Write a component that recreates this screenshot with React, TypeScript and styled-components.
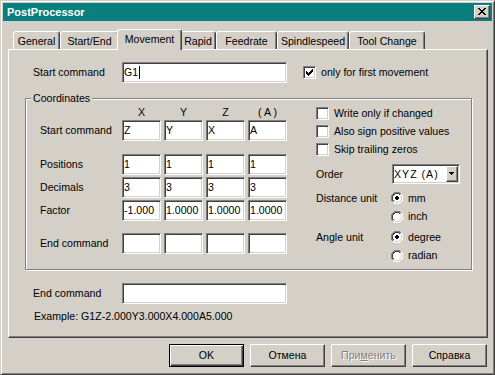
import React from 'react';
import styled, { createGlobalStyle, css } from 'styled-components';

const FACE = '#d4d0c8';
const SHADOW = '#808080';
const DARK = '#404040';
const HILITE = '#ffffff';

const GlobalStyle = createGlobalStyle`
  html, body { margin: 0; padding: 0; background: ${FACE}; }
  body {
    font-family: "Liberation Sans", Arial, sans-serif;
    font-size: 10.6px;
    color: #000;
  }
  * { box-sizing: border-box; }
`;

const sunken = css`
  background: #fff;
  border: 1px solid;
  border-color: ${SHADOW} ${HILITE} ${HILITE} ${SHADOW};
  box-shadow: inset 1px 1px ${DARK}, inset -1px -1px ${FACE};
`;

const raised = css`
  background: ${FACE};
  border: 1px solid;
  border-color: ${HILITE} ${DARK} ${DARK} ${HILITE};
  box-shadow: inset -1px -1px ${SHADOW};
`;

const Window = styled.div`
  width: 495px;
  height: 375px;
  background: ${FACE};
  border: 1px solid;
  border-color: ${FACE} ${DARK} ${DARK} ${FACE};
  box-shadow: inset 1px 1px ${HILITE}, inset -1px -1px ${SHADOW};
  padding: 2px;
  display: flex;
  flex-direction: column;
`;

const TitleBar = styled.div`
  height: 18px;
  flex-shrink: 0;
  background: #0a7f80;
  display: flex;
  align-items: center;
  padding: 0 2px 0 4px;
`;

const TitleText = styled.span`
  color: #fff;
  font-weight: bold;
  font-size: 11px;
  line-height: 13px;
`;

const CloseButton = styled.div`
  ${raised};
  margin-left: auto;
  width: 16px;
  height: 14px;
  display: flex;
  align-items: center;
  justify-content: center;
  padding: 0 1px 1px 0;
  & svg { display: block; }
`;

const Body = styled.div`
  flex: 1;
  display: flex;
  flex-direction: column;
  padding: 8px 4px 0 5px;
`;

const TabStrip = styled.div`
  display: flex;
  align-items: flex-end;
  height: 20px;
  padding-left: 5px;
`;

const Tab = styled.div<{ $w: number; $active?: boolean }>`
  width: ${(p) => p.$w}px;
  height: 18px;
  flex-shrink: 0;
  display: flex;
  align-items: center;
  justify-content: center;
  padding-top: 1px;
  background: ${FACE};
  border: 1px solid;
  border-bottom: 0;
  border-color: ${HILITE} ${DARK} transparent ${HILITE};
  border-radius: 3px 3px 0 0;
  box-shadow: inset -1px 0 ${SHADOW};
  white-space: nowrap;
  ${(p) =>
    p.$active &&
    css`
      width: ${p.$w + 4}px;
      height: 21px;
      margin: 0 -2px -1px;
      padding: 0 0 2px;
      position: relative;
      z-index: 2;
    `}
`;

const Panel = styled.div`
  position: relative;
  height: 289px;
  flex-shrink: 0;
  border: 1px solid;
  border-color: ${HILITE} ${DARK} ${DARK} ${HILITE};
  box-shadow: inset -1px -1px ${SHADOW};
  padding: 12px 0 0 16px;
  display: flex;
  flex-direction: column;
  align-items: flex-start;
`;

const FieldRow = styled.div<{ $mt?: number }>`
  display: flex;
  align-items: center;
  padding-left: 8px;
  margin-top: ${(p) => p.$mt ?? 0}px;
`;

const FieldLabel = styled.span<{ $w: number }>`
  width: ${(p) => p.$w}px;
  flex-shrink: 0;
  line-height: 13px;
  white-space: nowrap;
`;

const TextBox = styled.div<{ $w: number }>`
  ${sunken};
  width: ${(p) => p.$w}px;
  height: 21px;
  flex-shrink: 0;
  padding: 0 0 0 1px;
  display: flex;
  align-items: center;
  white-space: nowrap;
  overflow: hidden;
  line-height: 13px;
`;

const Caret = styled.span`
  display: inline-block;
  width: 1px;
  height: 13px;
  margin-left: 1px;
  background: #000;
`;

const CheckRow = styled.label<{ $h?: number; $ml?: number }>`
  display: flex;
  align-items: center;
  gap: 5px;
  height: ${(p) => p.$h ?? 18}px;
  margin-left: ${(p) => p.$ml ?? 0}px;
  white-space: nowrap;
  line-height: 13px;
`;

const CheckBoxFrame = styled.span`
  ${sunken};
  width: 13px;
  height: 13px;
  flex-shrink: 0;
  padding: 2px;
  & svg { display: block; }
`;

const GroupBox = styled.div`
  position: relative;
  margin-top: 15px;
  width: 447px;
  border: 1px solid ${SHADOW};
  box-shadow: inset 1px 1px ${HILITE}, 1px 1px ${HILITE};
  padding: 7px 0 4px 14px;
  display: flex;
  gap: 29px;
`;

const GroupTitle = styled.span`
  position: absolute;
  top: -7px;
  left: 5px;
  padding: 0 2px;
  background: ${FACE};
  line-height: 13px;
`;

const CoordCol = styled.div`
  display: flex;
  flex-direction: column;
`;

const CoordRow = styled.div<{ $mt?: number }>`
  display: grid;
  grid-template-columns: 79px repeat(4, 39px);
  column-gap: 3px;
  align-items: center;
  margin-top: ${(p) => p.$mt ?? 0}px;
`;

const ColHead = styled.span`
  text-align: center;
  line-height: 13px;
  white-space: pre;
`;

const RightCol = styled.div`
  display: flex;
  flex-direction: column;
  margin-top: -2px;
`;

const OptionRow = styled.div<{ $h?: number; $mt?: number }>`
  display: flex;
  align-items: center;
  height: ${(p) => p.$h ?? 18}px;
  margin-top: ${(p) => p.$mt ?? 0}px;
  white-space: nowrap;
  line-height: 13px;
`;

const OptionLabel = styled.span`
  width: 75px;
  flex-shrink: 0;
`;

const RadioItem = styled.label`
  display: flex;
  align-items: center;
  gap: 5px;
  & svg { display: block; }
`;

const Combo = styled.div`
  ${sunken};
  width: 68px;
  height: 20px;
  margin-left: 1px;
  padding: 1px;
  display: flex;
  align-items: center;
`;

const ComboText = styled.span`
  flex: 1;
  letter-spacing: 1px;
  line-height: 13px;
`;

const ComboButton = styled.span`
  ${raised};
  width: 12px;
  height: 16px;
  display: flex;
  align-items: center;
  justify-content: center;
  padding: 0 1px 1px 0;
  & svg { display: block; }
`;

const Example = styled.div`
  margin-top: 6px;
  padding-left: 9px;
  line-height: 13px;
  white-space: nowrap;
`;

const ButtonBar = styled.div`
  display: flex;
  justify-content: flex-end;
  gap: 6px;
  margin-top: 6px;
  padding-right: 1px;
`;

const Button = styled.div<{ $default?: boolean; $disabled?: boolean }>`
  ${raised};
  width: 75px;
  height: 23px;
  display: flex;
  align-items: center;
  justify-content: center;
  line-height: 13px;
  ${(p) =>
    p.$default &&
    css`
      border: 1px solid #000;
      box-shadow: inset 1px 1px ${HILITE}, inset -1px -1px ${DARK}, inset -2px -2px ${SHADOW};
    `}
  ${(p) =>
    p.$disabled &&
    css`
      color: ${SHADOW};
      text-shadow: 1px 1px ${HILITE};
    `}
`;

const PixelIcon = ({ rows, color }: { rows: string[]; color: string }) => (
  <svg width={rows[0].length} height={rows.length} shapeRendering="crispEdges">
    {rows.flatMap((r, y) =>
      r.split('').map((c, x) =>
        c === 'X' ? <rect key={`${x}-${y}`} x={x} y={y} width={1} height={1} fill={color} /> : null
      )
    )}
  </svg>
);

const CHECK = ['......X', '.....XX', 'X...XXX', 'XX.XXX.', 'XXXXX..', '.XXX...', '..X....'];
const CLOSE = ['XX....XX', '.XX..XX.', '..XXXX..', '...XX...', '..XXXX..', '.XX..XX.', 'XX....XX'];
const ARROW = ['XXXXX', '.XXX.', '..X..'];

const RadioIcon = ({ checked }: { checked?: boolean }) => {
  const px: React.ReactNode[] = [];
  for (let y = 0; y < 12; y++) {
    for (let x = 0; x < 12; x++) {
      const dx = x + 0.5 - 6;
      const dy = y + 0.5 - 6;
      const d = Math.sqrt(dx * dx + dy * dy);
      const tl = dx + dy < 0;
      let fill: string | null = null;
      if (d > 6.05) fill = null;
      else if (d > 5.0) fill = tl ? SHADOW : HILITE;
      else if (d > 4.0) fill = tl ? DARK : FACE;
      else fill = '#fff';
      if (checked && Math.abs(dx) < 2 && Math.abs(dy) < 2 && !(Math.abs(dx) === 1.5 && Math.abs(dy) === 1.5)) {
        fill = '#000';
      }
      if (fill) px.push(<rect key={`${x}-${y}`} x={x} y={y} width={1} height={1} fill={fill} />);
    }
  }
  return (
    <svg width={12} height={12} shapeRendering="crispEdges">
      {px}
    </svg>
  );
};

const CheckBox = ({ checked }: { checked?: boolean }) => (
  <CheckBoxFrame>{checked && <PixelIcon rows={CHECK} color="#000" />}</CheckBoxFrame>
);

const tabs = [
  { label: 'General', w: 47 },
  { label: 'Start/End', w: 59 },
  { label: 'Movement', w: 61, active: true },
  { label: 'Rapid', w: 36 },
  { label: 'Feedrate', w: 61 },
  { label: 'Spindlespeed', w: 72 },
  { label: 'Tool Change', w: 76 },
];

const coordRows = [
  { label: 'Positions', values: ['1', '1', '1', '1'], mt: 13 },
  { label: 'Decimals', values: ['3', '3', '3', '3'], mt: 2 },
  { label: 'Factor', values: ['-1.000', '1.0000', '1.0000', '1.0000'], mt: 2 },
  { label: 'End command', values: ['', '', '', ''], mt: 12 },
];

export default function App() {
  return (
    <>
      <GlobalStyle />
      <Window>
        <TitleBar>
          <TitleText>PostProcessor</TitleText>
          <CloseButton>
            <PixelIcon rows={CLOSE} color="#000" />
          </CloseButton>
        </TitleBar>
        <Body>
          <TabStrip>
            {tabs.map((t) => (
              <Tab key={t.label} $w={t.w} $active={t.active}>
                {t.label}
              </Tab>
            ))}
          </TabStrip>
          <Panel>
            <FieldRow>
              <FieldLabel $w={89}>Start command</FieldLabel>
              <TextBox $w={165}>
                G1
                <Caret />
              </TextBox>
              <CheckRow $ml={16}>
                <CheckBox checked />
                only for first movement
              </CheckRow>
            </FieldRow>

            <GroupBox>
              <GroupTitle>Coordinates</GroupTitle>
              <CoordCol>
                <CoordRow>
                  <span />
                  <ColHead>X</ColHead>
                  <ColHead>Y</ColHead>
                  <ColHead>Z</ColHead>
                  <ColHead>( A )</ColHead>
                </CoordRow>
                <CoordRow $mt={1}>
                  <FieldLabel $w={79}>Start command</FieldLabel>
                  {['Z', 'Y', 'X', 'A'].map((v, i) => (
                    <TextBox key={i} $w={39}>
                      {v}
                    </TextBox>
                  ))}
                </CoordRow>
                {coordRows.map((r) => (
                  <CoordRow key={r.label} $mt={r.mt}>
                    <FieldLabel $w={79}>{r.label}</FieldLabel>
                    {r.values.map((v, i) => (
                      <TextBox key={i} $w={39}>
                        {v}
                      </TextBox>
                    ))}
                  </CoordRow>
                ))}
              </CoordCol>
              <RightCol>
                <CheckRow $h={18}>
                  <CheckBox />
                  Write only if changed
                </CheckRow>
                <CheckRow $h={18}>
                  <CheckBox />
                  Also sign positive values
                </CheckRow>
                <CheckRow $h={19}>
                  <CheckBox />
                  Skip trailing zeros
                </CheckRow>
                <OptionRow $h={20} $mt={5}>
                  <OptionLabel>Order</OptionLabel>
                  <Combo>
                    <ComboText>XYZ (A)</ComboText>
                    <ComboButton>
                      <PixelIcon rows={ARROW} color="#000" />
                    </ComboButton>
                  </Combo>
                </OptionRow>
                <OptionRow $h={18} $mt={5}>
                  <OptionLabel>Distance unit</OptionLabel>
                  <RadioItem>
                    <RadioIcon checked />
                    mm
                  </RadioItem>
                </OptionRow>
                <OptionRow $h={19}>
                  <OptionLabel />
                  <RadioItem>
                    <RadioIcon />
                    inch
                  </RadioItem>
                </OptionRow>
                <OptionRow $h={18} $mt={2}>
                  <OptionLabel>Angle unit</OptionLabel>
                  <RadioItem>
                    <RadioIcon checked />
                    degree
                  </RadioItem>
                </OptionRow>
                <OptionRow $h={19}>
                  <OptionLabel />
                  <RadioItem>
                    <RadioIcon />
                    radian
                  </RadioItem>
                </OptionRow>
              </RightCol>
            </GroupBox>

            <FieldRow $mt={13}>
              <FieldLabel $w={89}>End command</FieldLabel>
              <TextBox $w={165} />
            </FieldRow>
            <Example>Example: G1Z-2.000Y3.000X4.000A5.000</Example>
          </Panel>
          <ButtonBar>
            <Button $default>OK</Button>
            <Button>Отмена</Button>
            <Button $disabled>
              При<u>м</u>енить
            </Button>
            <Button>Справка</Button>
          </ButtonBar>
        </Body>
      </Window>
    </>
  );
}
